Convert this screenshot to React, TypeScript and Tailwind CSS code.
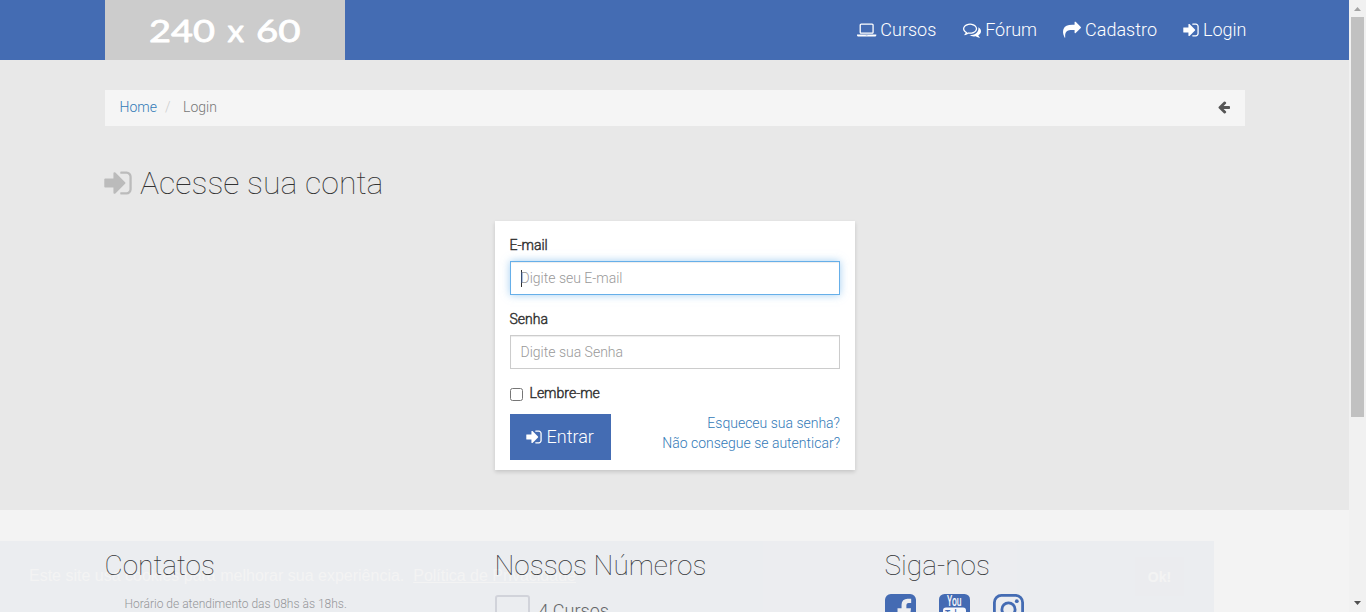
import type { ReactNode } from "react";

const SIGN_IN =
  "M1312 896q0 26-19 45l-544 544q-19 19-45 19t-45-19-19-45v-288h-448q-26 0-45-19t-19-45v-384q0-26 19-45t45-19h448v-288q0-26 19-45t45-19 45 19l544 544q19 19 19 45zm352-352v704q0 119-84.5 203.5t-203.5 84.5h-320q-13 0-22.5-9.5t-9.5-22.5q0-4-1-20t-.5-26.5 3-23.5 10-19.5 20.5-6.5h320q66 0 113-47t47-113v-704q0-66-47-113t-113-47h-312l-11.5-1-11.5-3-8-5.5-7-9-2-13.5q0-4-1-20t-.5-26.5 3-23.5 10-19.5 20.5-6.5h320q119 0 203.5 84.5t84.5 203.5z";
const LAPTOP =
  "M416 1280q-66 0-113-47t-47-113v-704q0-66 47-113t113-47h1088q66 0 113 47t47 113v704q0 66-47 113t-113 47h-1088zm-32-864v704q0 13 9.5 22.5t22.5 9.5h1088q13 0 22.5-9.5t9.5-22.5v-704q0-13-9.5-22.5t-22.5-9.5h-1088q-13 0-22.5 9.5t-9.5 22.5zm1376 928h160v96q0 40-47 68t-113 28h-1600q-66 0-113-28t-47-68v-96h1760zm-720 96q16 0 16-16t-16-16h-160q-16 0-16 16t16 16h160z";
const COMMENTS =
  "M704 384q-153 0-286 52t-211.5 141-78.5 191q0 82 53 158t149 132l97 56-35 84q34-20 62-39l44-31 53 10q78 14 153 14 153 0 286-52t211.5-141 78.5-191-78.5-191-211.5-141-286-52zm0-128q191 0 353.5 68.5t256.5 186.5 94 257-94 257-256.5 186.5-353.5 68.5q-86 0-176-16-124 88-278 128-36 9-86 16h-3q-11 0-20.5-8t-11.5-21q-1-3-1-6.5t.5-6.5 2-6l2.5-5 3.5-5.5 4-5 4.5-5 4-4.5q5-6 23-25t26-29.5 22.5-29 25-38.5 20.5-44q-124-72-195-177t-71-224q0-139 94-257t256.5-186.5 353.5-68.5zm822 1169q10 24 20.5 44t25 38.5 22.5 29 26 29.5 23 25q1 1 4 4.5t4.5 5 4 5 3.5 5.5l2.5 5 2 6 .5 6.5-1 6.5q-3 14-13 22t-22 7q-50-7-86-16-154-40-278-128-90 16-176 16-271 0-472-132 58 4 88 4 161 0 309-45t264-129q125-92 192-212t67-254q0-77-23-152 129 71 204 178t75 230q0 120-71 224.5t-195 176.5z";
const SHARE =
  "M1792 640q0 26-19 45l-512 512q-19 19-45 19t-45-19-19-45v-256h-224q-98 0-175.5 6t-154 21.5-133 42.5-105.5 69.5-80 101-48.5 138.5-17.5 181q0 55 5 123 0 6 2.5 23.5t2.5 26.5q0 15-8.5 25t-23.5 10q-16 0-28-17-7-9-13-22t-13.5-30-10.5-24q-127-285-127-451 0-199 53-333 162-403 875-403h224v-256q0-26 19-45t45-19 45 19l512 512q19 19 19 45z";
const ARROW_LEFT =
  "M1664 896v128q0 53-32.5 90.5t-84.5 37.5h-704l293 294q38 36 38 90t-38 90l-75 76q-37 37-90 37-52 0-91-37l-651-652q-37-37-37-90 0-52 37-91l651-650q38-38 91-38 52 0 90 38l75 74q38 38 38 91t-38 91l-293 293h704q52 0 84.5 37.5t32.5 90.5z";
const FACEBOOK =
  "M1376 128q119 0 203.5 84.5t84.5 203.5v960q0 119-84.5 203.5t-203.5 84.5h-188v-595h199l30-232h-229v-148q0-56 23.5-84t91.5-28l122-1v-207q-63-9-178-9-136 0-217.5 80t-81.5 226v171h-200v232h200v595h-532q-119 0-203.5-84.5t-84.5-203.5v-960q0-119 84.5-203.5t203.5-84.5h960z";

function Glyph({ d, box, className }: { d: string; box: string; className: string }) {
  return (
    <svg viewBox={box} className={`shrink-0 ${className}`} fill="currentColor" aria-hidden="true">
      <path d={d} />
    </svg>
  );
}

function NavItem({ children }: { children: ReactNode }) {
  return (
    <a href="#" className="flex items-center gap-1 whitespace-nowrap">
      {children}
    </a>
  );
}

function Header() {
  return (
    <header className="flex h-[60px] shrink-0 justify-between bg-[#446cb3] pr-[102.5px] pl-[105px]">
      <div className="h-[60px] w-60 bg-[#ccc]">
        <svg
          width="240"
          height="60"
          viewBox="0 0 240 60"
          className="fill-white stroke-white font-['Lato'] text-[31px] font-normal"
          strokeWidth="0.8"
          strokeLinejoin="round"
        >
          <text x="44" y="41.6" textLength="66" lengthAdjust="spacingAndGlyphs">240</text>
          <text x="122.5" y="41.6" textLength="16.5" lengthAdjust="spacingAndGlyphs">x</text>
          <text x="151" y="41.6" textLength="44.5" lengthAdjust="spacingAndGlyphs">60</text>
        </svg>
      </div>
      <nav className="flex h-[60px] gap-[26px] text-[18px] text-white">
        <NavItem>
          <Glyph d={LAPTOP} box="0 0 1920 1792" className="-ml-[0.5px] h-[18px] w-[19.3px]" />
          <span className="-ml-[0.3px] mr-[0.8px]">Cursos</span>
        </NavItem>
        <NavItem>
          <Glyph d={COMMENTS} box="0 0 1792 1792" className="h-[18px] w-[18px]" />
          Fórum
        </NavItem>
        <NavItem>
          <Glyph d={SHARE} box="0 0 1792 1792" className="h-[18px] w-[18px]" />
          Cadastro
        </NavItem>
        <NavItem>
          <Glyph d={SIGN_IN} box="128 0 1536 1792" className="h-[18px] w-[16px]" />
          Login
        </NavItem>
      </nav>
    </header>
  );
}

function LoginCard() {
  return (
    <form className="ml-[390px] h-[249px] w-[360px] bg-white px-[15px] pt-[14px] shadow-[0_2px_4px_rgba(0,0,0,0.15)]">
      <label className="-ml-[0.5px] block h-[26px] [-webkit-text-stroke:0.45px_#333]">E-mail</label>
      <div className="flex h-[34px] items-center border border-[#66afe9] pl-[10px] text-[#999] shadow-[inset_0_1px_1px_rgba(0,0,0,0.075),0_0_8px_rgba(102,175,233,0.6)]">
        <span className="h-[17px] w-px bg-[#333]" />
        <span className="-ml-[1.5px]">Digite seu E-mail</span>
      </div>
      <label className="mt-[14px] -ml-[0.5px] block h-[26px] [-webkit-text-stroke:0.45px_#333]">Senha</label>
      <div className="flex h-[34px] items-center border border-[#ccc] pl-[9.5px] text-[#999] shadow-[inset_0_1px_1px_rgba(0,0,0,0.075)]">
        Digite sua Senha
      </div>
      <label className="mt-[14px] flex h-5 items-start [-webkit-text-stroke:0.45px_#333]">
        <span className="mt-[5px] mr-[6.5px] h-[13px] w-[13px] rounded-[2.5px] border border-[#767676] bg-white" />
        Lembre-me
      </label>
      <div className="mt-[10px] flex justify-between">
        <button type="button" className="mt-px flex h-[46px] w-[101px] items-center gap-1 bg-[#446cb3] pl-4 text-[18px] text-white">
          <Glyph d={SIGN_IN} box="128 0 1536 1792" className="h-[18px] w-[16px]" />
          <span className="ml-[0.5px]">Entrar</span>
        </button>
        <div className="text-right text-[#337ab7]">
          <p>Esqueceu sua senha?</p>
          <p>Não consegue se autenticar?</p>
        </div>
      </div>
    </form>
  );
}

function Footer() {
  return (
    <footer className="grid h-[102px] shrink-0 grid-cols-[390px_390px_1fr] bg-[#f3f3f3] pt-[39px] pl-[105px]">
      <section>
        <h3 className="-ml-[0.5px] text-[28px] leading-[33px] font-thin whitespace-nowrap">Contatos</h3>
        <p className="mt-[12px] ml-[19.5px] text-[12px] leading-5 text-[#999]">Horário de atendimento das 08hs às 18hs.</p>
      </section>
      <section>
        <h3 className="-ml-[0.5px] text-[28px] leading-[33px] font-thin whitespace-nowrap">Nossos Números</h3>
        <div className="-ml-[0.5px] mt-[13px] flex gap-[9px]">
          <span className="h-[32px] w-[35px] shrink-0 rounded-[3px] border-2 border-[#d8d8dc]" />
          <span className="mt-[6px] text-[18px] text-[#666]">4 Cursos</span>
        </div>
      </section>
      <section>
        <h3 className="-ml-[0.5px] text-[28px] leading-[33px] font-thin whitespace-nowrap">Siga-nos</h3>
        <div className="-ml-[0.5px] mt-[12px] flex gap-[23.3px] text-[#446cb3]">
          <Glyph d={FACEBOOK} box="128 128 1536 1536" className="h-[31px] w-[31px]" />
          <svg width="31" height="31" viewBox="0 0 31 31" className="shrink-0">
            <rect width="31" height="31" rx="5.5" fill="currentColor" />
            <text x="8" y="12.3" textLength="14.5" lengthAdjust="spacingAndGlyphs" className="fill-white font-['Roboto'] text-[14px] font-medium">
              You
            </text>
            <rect x="4" y="13.5" width="23" height="15" rx="3" className="fill-white" />
            <text x="6" y="24.5" textLength="19" lengthAdjust="spacingAndGlyphs" className="fill-[#446cb3] font-['Roboto'] text-[12px] font-medium">
              Tube
            </text>
          </svg>
          <svg width="31" height="31" viewBox="0 0 31 31" className="shrink-0" fill="none" stroke="currentColor">
            <rect x="1.4" y="1.4" width="28.2" height="28.2" rx="7" strokeWidth="2.8" />
            <circle cx="15.5" cy="15.5" r="6.6" strokeWidth="2.8" />
            <circle cx="23.8" cy="7.2" r="1.9" fill="currentColor" stroke="none" />
          </svg>
        </div>
      </section>
    </footer>
  );
}

function CookieBanner() {
  return (
    <div className="absolute top-[541px] left-0 flex h-[71px] w-[1214px] items-center justify-between bg-[#446cb3] pr-[30px] pl-[29px] font-['Liberation_Sans'] text-[16px] font-normal whitespace-nowrap text-white opacity-[0.04]">
      <p className="-mt-0.5">
        Este site usa cookies para melhorar sua experiência. &nbsp;
        <span className="underline">Política de Privacidade</span>
      </p>
      <span className="flex h-[39px] w-[49px] items-center justify-center bg-[#446099] text-[14px] font-bold">Ok!</span>
    </div>
  );
}

function Scrollbar() {
  return (
    <div className="flex w-[17px] shrink-0 flex-col items-center bg-[#f1f1f1]">
      <svg width="17" height="17" viewBox="0 0 17 17" fill="#a3a3a3">
        <path d="M5 11h7L8.5 7z" />
      </svg>
      <div className="h-[400px] w-[13px] bg-[#c1c1c1]" />
      <svg width="17" height="17" viewBox="0 0 17 17" fill="#505050" className="mt-auto">
        <path d="M5 6h7L8.5 10z" />
      </svg>
    </div>
  );
}

export default function App() {
  return (
    <div className="relative flex h-[612px] overflow-hidden bg-[#e8e8e8] font-['Roboto',sans-serif] text-[14px] leading-5 font-light text-[#333]">
      <div className="flex w-[1349px] shrink-0 flex-col">
        <Header />
        <main className="h-[450px] shrink-0 px-[105px] pt-[30px]">
          <div className="flex h-9 w-[1140px] items-center justify-between bg-[#f5f5f5] px-[15px] pb-0.5">
            <div className="-ml-[0.5px] flex">
              <a href="#" className="text-[#337ab7]">Home</a>
              <span className="ml-[8px] text-[#ccc]">/</span>
              <span className="ml-[12.5px] text-[#777]">Login</span>
            </div>
            <Glyph d={ARROW_LEFT} box="128 0 1536 1792" className="h-[14px] w-[12px] text-[#555]" />
          </div>
          <h2 className="mt-[37px] -ml-px flex h-10 items-center gap-2 text-[32px] leading-10 font-thin">
            <Glyph d={SIGN_IN} box="128 0 1536 1792" className="h-8 w-7 text-[#bbb]" />
            Acesse sua conta
          </h2>
          <div className="mt-[18px]">
            <LoginCard />
          </div>
        </main>
        <Footer />
      </div>
      <CookieBanner />
      <Scrollbar />
    </div>
  );
}
